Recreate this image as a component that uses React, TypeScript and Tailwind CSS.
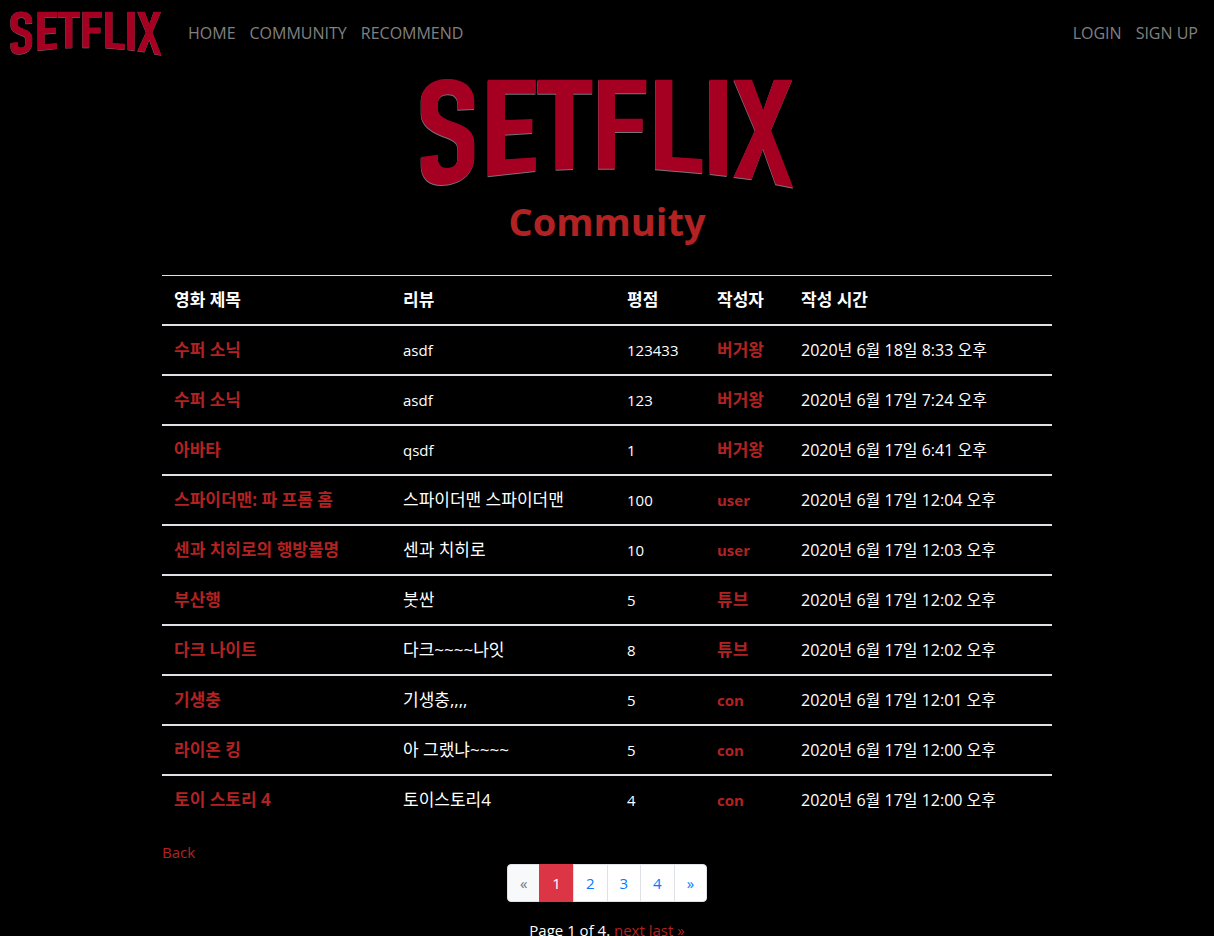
import React from "react";

const LETTERS = [
  "M191 118V95C191 50 155 28 111 28C65 28 31 52 31 98V130C31 165 58 184 95 199C125 210 141 215 141 237V265C141 285 127 295 110 295C93 295 82 285 82 268V255L31 262V285C31 325 55 346 92 346C150 345 191 312 191 262V222C191 185 165 170 130 158C100 147 82 138 82 118V102C82 83 95 74 112 74C130 74 141 84 141 102V120Z",
  "M232 30H375V72H283V151L365 148V190L283 195V269L375 263V304L232 320Z",
  "M381 30H545V72H488V298L436 300V72H381Z",
  "M563 30H707V71H613V147H696V187H613V297H563Z",
  "M734 30H785V262L875 268V311L734 299Z",
  "M897 30H949V319L898 313Z",
  "M969 30H1024L1058 122L1090 30H1145L1081 182L1148 354L1095 344L1057 238L1023 329L969 322L1033 182Z",
];

function Logo({ className }: { className: string }) {
  return (
    <svg viewBox="28 25 1122 333" className={className} role="img" aria-label="SETFLIX">
      <g fill="#77747c" transform="translate(-1 3)">
        {LETTERS.map((d) => (
          <path key={d} d={d} />
        ))}
      </g>
      <g fill="#a50021">
        {LETTERS.map((d) => (
          <path key={d} d={d} />
        ))}
      </g>
    </svg>
  );
}

type Review = { movie: string; review: string; score: string; author: string; time: string };

const REVIEWS: Review[] = [
  { movie: "수퍼 소닉", review: "asdf", score: "123433", author: "버거왕", time: "2020년 6월 18일 8:33 오후" },
  { movie: "수퍼 소닉", review: "asdf", score: "123", author: "버거왕", time: "2020년 6월 17일 7:24 오후" },
  { movie: "아바타", review: "qsdf", score: "1", author: "버거왕", time: "2020년 6월 17일 6:41 오후" },
  { movie: "스파이더맨: 파 프롬 홈", review: "스파이더맨 스파이더맨", score: "100", author: "user", time: "2020년 6월 17일 12:04 오후" },
  { movie: "센과 치히로의 행방불명", review: "센과 치히로", score: "10", author: "user", time: "2020년 6월 17일 12:03 오후" },
  { movie: "부산행", review: "붓싼", score: "5", author: "튜브", time: "2020년 6월 17일 12:02 오후" },
  { movie: "다크 나이트", review: "다크~~~~나잇", score: "8", author: "튜브", time: "2020년 6월 17일 12:02 오후" },
  { movie: "기생충", review: "기생충,,,,", score: "5", author: "con", time: "2020년 6월 17일 12:01 오후" },
  { movie: "라이온 킹", review: "아 그랬냐~~~~", score: "5", author: "con", time: "2020년 6월 17일 12:00 오후" },
  { movie: "토이 스토리 4", review: "토이스토리4", score: "4", author: "con", time: "2020년 6월 17일 12:00 오후" },
];

const hangul = (s: string) => /[가-힣]/.test(s);
const sizeOf = (s: string) => (hangul(s) ? "text-[17px]" : "text-[15px]");

const PAGES = ["2", "3", "4", "»"];

export default function App() {
  return (
    <div className="min-h-screen bg-black font-['Open_Sans','Noto_Sans_CJK_KR',sans-serif] text-[15px] leading-6 text-white">
      <nav className="flex items-start justify-between pt-[11px] pr-4 pl-[10px] text-base text-[#808080]">
        <div className="flex items-start">
          <a href="#home" className="mr-[26px]">
            <Logo className="block h-[45px] w-[152px]" />
          </a>
          <div className="flex gap-[14px] pt-[10px]">
            <a href="#home">HOME</a>
            <a href="#community">COMMUNITY</a>
            <a href="#recommend">RECOMMEND</a>
          </div>
        </div>
        <div className="flex gap-[14px] pt-[10px]">
          <a href="#login">LOGIN</a>
          <a href="#signup">SIGN UP</a>
        </div>
      </nav>

      <header className="flex flex-col items-center pt-[22px]">
        <Logo className="block h-[111px] w-[374px]" />
        <h1 className="mt-2 text-[38px] leading-[48px] font-bold text-[#b22222]">Commuity</h1>
      </header>

      <main className="mx-auto mt-[30px] max-w-[890px]">
        <table className="w-full table-fixed border-collapse text-left">
          <colgroup>
            <col className="w-[229px]" />
            <col className="w-[224px]" />
            <col className="w-[90px]" />
            <col className="w-[84px]" />
            <col />
          </colgroup>
          <thead>
            <tr className="h-[49px] border-t border-b-2 border-t-[#dee2e6] border-b-[#dee2e6] text-[17px]">
              <th className="px-3 font-bold">영화 제목</th>
              <th className="px-3 font-bold">리뷰</th>
              <th className="px-3 font-bold">평점</th>
              <th className="px-3 font-bold">작성자</th>
              <th className="px-3 font-bold">작성 시간</th>
            </tr>
          </thead>
          <tbody>
            {REVIEWS.map((r, i) => (
              <tr key={i} className="h-[50px] border-b-2 border-[#dee2e6] last:border-b-0">
                <td className={"px-3 font-bold text-[#b22222] " + sizeOf(r.movie)}>
                  <a href="#movie">{r.movie}</a>
                </td>
                <td className={"px-3 " + sizeOf(r.review)}>{r.review}</td>
                <td className="px-3">{r.score}</td>
                <td className={"px-3 font-bold text-[#b22222] " + sizeOf(r.author)}>
                  <a href="#author">{r.author}</a>
                </td>
                <td className="px-3 text-[16px]">{r.time}</td>
              </tr>
            ))}
          </tbody>
        </table>

        <div className="mt-[15px]">
          <a href="#back" className="block w-fit text-[#b22222]">Back</a>
        </div>

        <ul className="flex justify-center leading-5 text-[#007bff]">
          <li className="rounded-l border border-[#dee2e6] bg-[#f8f9fa] px-3 py-2 text-[#6c757d]">«</li>
          <li className="-ml-px">
            <a href="#page-1" aria-current="page" className="block border border-[#dc3545] bg-[#dc3545] px-3 py-2 text-white">1</a>
          </li>
          {PAGES.map((p) => (
            <li key={p} className="group -ml-px">
              <a href="#page" className="block border border-[#dee2e6] bg-white px-3 py-2 group-last:rounded-r">{p}</a>
            </li>
          ))}
        </ul>

        <p className="mt-4 text-center">
          Page 1 of 4. <a href="#next" className="text-[#b22222]">next</a>{" "}
          <a href="#last" className="text-[#b22222]">last »</a>
        </p>
      </main>
    </div>
  );
}
